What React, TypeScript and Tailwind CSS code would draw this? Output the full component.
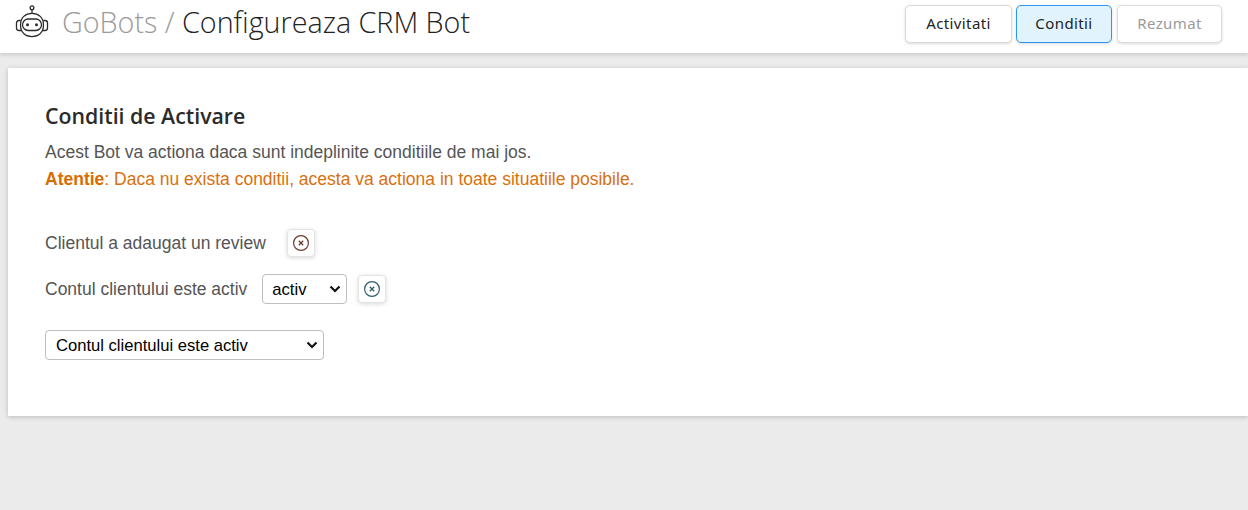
import React from 'react';

const RemoveButton: React.FC<{ color: string }> = ({ color }) => (
  <button className="flex h-[28px] w-[28px] items-center justify-center rounded-[4px] border border-[#e4e4e4] bg-white shadow-[0_1px_4px_rgba(0,0,0,0.16)]">
    <svg width="18" height="18" viewBox="0 0 18 18" fill="none" stroke={color} strokeWidth="1.200">
      <circle cx="9" cy="9" r="7.400" />
      <path d="M6.800 6.800l4.400 4.400M11.200 6.800l-4.400 4.400" strokeWidth="1.300" />
    </svg>
  </button>
);

const Chevron = () => (
  <svg className="pointer-events-none absolute right-[6px] top-[11px]" width="12" height="8" viewBox="0 0 12 8" fill="none" stroke="#111" strokeWidth="2.200">
    <path d="M1.500 1.500L6 6l4.500-4.500" />
  </svg>
);

const RobotIcon = () => (
  <svg width="34" height="34" viewBox="0 0 34 34" fill="none" stroke="#2b2b2b" strokeWidth="1.300">
    <circle cx="17" cy="2.800" r="1.900" />
    <path d="M17 4.800v3.600" />
    <path d="M5.500 20c0-7.500 5-11.600 11.500-11.600S28.500 12.500 28.500 20c0 7.500-5 11.600-11.500 11.600S5.500 27.500 5.500 20z" />
    <rect x="7.500" y="14" width="19" height="11.500" rx="5.700" />
    <path d="M5.700 15.500H4C2.500 15.500 1.500 16.500 1.500 18v5c0 1.500 1 2.500 2.500 2.500h2.600M28.300 15.500H30c1.500 0 2.500 1 2.500 2.500v5c0 1.500-1 2.500-2.500 2.500h-2.600" />
    <circle cx="12.500" cy="19.800" r="1.500" fill="#2b2b2b" stroke="none" />
    <circle cx="21.500" cy="19.800" r="1.500" fill="#2b2b2b" stroke="none" />
  </svg>
);

const tabs = [
  { label: 'Activitati', cls: 'w-[107px] border-[#d9d9d9] bg-white text-[#222]' },
  { label: 'Conditii', cls: 'w-[96px] border-[#2b97f5] bg-[#e1f4fe] text-[#222]' },
  { label: 'Rezumat', cls: 'ml-[1px] w-[105px] border-[#dcdcdc] bg-white text-[#9a9a9a]' },
];

export default function App() {
  return (
    <div className="h-[510px] overflow-hidden bg-[#ebebeb] font-['Liberation_Sans',sans-serif]">
      <header className="flex h-[53px] items-center justify-between bg-white pl-[15px] pr-[26px] shadow-[0_1px_5px_rgba(0,0,0,0.18)]">
        <div className="flex items-center gap-[13px] pb-[10px] font-['Open_Sans',sans-serif] text-[28.700px] font-light leading-[40px] text-[#222]">
          <RobotIcon />
          <h1>
            <span className="text-[#9b9b9b]">GoBots / </span>Configureaza CRM Bot
          </h1>
        </div>
        <nav className="flex gap-[4px] pb-[6px]">
          {tabs.map((tab) => (
            <button
              key={tab.label}
              className={`h-[38px] rounded-[5px] border font-['Noto_Sans',sans-serif] text-[15px] tracking-[0.4px] shadow-[0_1px_3px_rgba(0,0,0,0.15)] ${tab.cls}`}
            >
              {tab.label}
            </button>
          ))}
        </nav>
      </header>

      <main className="ml-2 mt-[15px] h-[348px] bg-white pl-[37px] pt-[33px] text-[#555] shadow-[0_1px_5px_rgba(0,0,0,0.2)]">
        <h2 className="font-['Open_Sans',sans-serif] text-[21.300px] font-semibold leading-[30px] text-[#2b2b2b]">Conditii de Activare</h2>
        <p className="mt-[8px] text-[17.500px] leading-[27px]">Acest Bot va actiona daca sunt indeplinite conditiile de mai jos.</p>
        <p className="text-[17.500px] leading-[27px] text-[#d9700f]">
          <b className="text-[#d96c00]">Atentie</b>: Daca nu exista conditii, acesta va actiona in toate situatiile posibile.
        </p>

        <div className="mt-[36px] flex items-center text-[17.500px]">
          <span>Clientul a adaugat un review</span>
          <span className="ml-[21px]"><RemoveButton color="#6b3a30" /></span>
        </div>
        <div className="mt-[17px] flex items-center text-[17.500px]">
          <span>Contul clientului este activ</span>
          <div className="relative ml-[15px]">
            <select className="block h-[30px] w-[85px] appearance-none rounded-[4px] border border-[#bdbdbd] bg-white pl-[9px] pt-[2px] text-[16.600px] text-black">
              <option>activ</option>
            </select>
            <Chevron />
          </div>
          <span className="ml-[11px]"><RemoveButton color="#2f5a70" /></span>
        </div>
        <div className="relative mt-[26px] w-[279px]">
          <select className="block h-[30px] w-full appearance-none rounded-[4px] border border-[#bdbdbd] bg-white pl-[10px] pt-[2px] text-[16.600px] text-black">
            <option>Contul clientului este activ</option>
          </select>
          <Chevron />
        </div>
      </main>
    </div>
  );
}
